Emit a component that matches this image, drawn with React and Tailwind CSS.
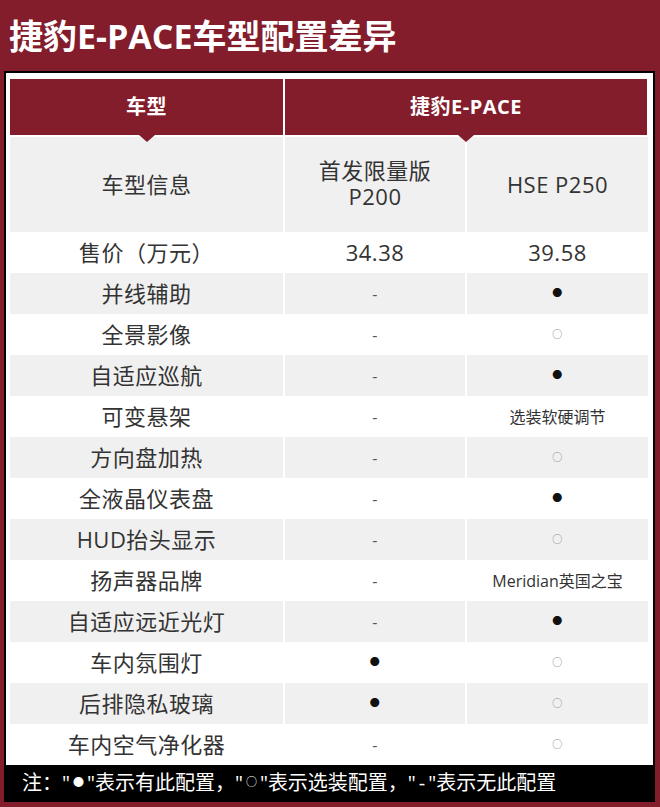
import React from 'react';

const rows = [
  { label: '售价（万元）', a: '34.38', b: '39.58', gray: false },
  { label: '并线辅助', a: '-', b: '●', gray: true },
  { label: '全景影像', a: '-', b: '○', gray: false },
  { label: '自适应巡航', a: '-', b: '●', gray: true },
  { label: '可变悬架', a: '-', b: '选装软硬调节', gray: false },
  { label: '方向盘加热', a: '-', b: '○', gray: true },
  { label: '全液晶仪表盘', a: '-', b: '●', gray: false },
  { label: 'HUD抬头显示', a: '-', b: '○', gray: true },
  { label: '扬声器品牌', a: '-', b: 'Meridian英国之宝', gray: false },
  { label: '自适应远近光灯', a: '-', b: '●', gray: true },
  { label: '车内氛围灯', a: '●', b: '○', gray: false },
  { label: '后排隐私玻璃', a: '●', b: '○', gray: true },
  { label: '车内空气净化器', a: '-', b: '○', gray: false },
];

const font = { fontFamily: '"Open Sans", "Noto Sans CJK SC", sans-serif' };

// symbols and long notes are drawn smaller than the plain values
const Value = ({ v }) => {
  if (v === '●') return <span className="text-[10px] text-[#111]">●</span>;
  if (v === '○') return <span className="text-[10px] text-[#888]">○</span>;
  if (v === '-') return <span className="text-[16px] text-[#555]">-</span>;
  if (v.length > 5) return <span className="text-[16px] tracking-normal">{v}</span>;
  return <span>{v}</span>;
};

const Triangle = () => (
  <div className="absolute left-1/2 top-full -translate-x-1/2 w-0 h-0 border-l-[8px] border-r-[8px] border-t-[7px] border-l-transparent border-r-transparent border-t-[#831c2b] z-10" />
);

export default function App() {
  return (
    <div className="w-[660px] h-[807px] bg-[#831c2b] overflow-hidden" style={font}>
      {/* Title */}
      <div className="h-[71px] flex items-center pl-[9px]">
        <h1 className="text-white font-bold text-[34px] leading-none">捷豹E-PACE车型配置差异</h1>
      </div>

      {/* Table frame */}
      <div className="ml-[4px] w-[651px] border-2 border-black bg-black">
        <div className="bg-white pt-[6px] pl-[4px] pr-[5px] text-[#333] text-[22px] tracking-[0.5px]">
          {/* Header */}
          <div className="grid grid-cols-[273px_362px] gap-x-[2px] mb-[2px]">
            <div className="relative h-[56px] bg-[#831c2b] flex items-center justify-center text-white font-bold text-[20px]">
              车型
              <Triangle />
            </div>
            <div className="relative h-[56px] bg-[#831c2b] flex items-center justify-center text-white font-bold text-[20px]">
              捷豹E-PACE
              <Triangle />
            </div>
          </div>

          {/* Trim row */}
          <div className="grid grid-cols-[273px_180px_181px] gap-x-[2px] h-[95px]">
            <div className="bg-[#f0f0f0] flex items-center justify-center">车型信息</div>
            <div className="bg-[#f0f0f0] flex items-center justify-center pb-[4px]">
              <div className="w-[120px] text-center leading-[26px]">首发限量版 P200</div>
            </div>
            <div className="bg-[#f0f0f0] flex items-center justify-center">HSE P250</div>
          </div>

          {/* Features */}
          {rows.map((r) => (
            <div key={r.label} className="grid grid-cols-[273px_180px_181px] gap-x-[2px] h-[41px]">
              <div className={`${r.gray ? 'bg-[#f0f0f0]' : 'bg-white'} flex items-center justify-center`}>{r.label}</div>
              <div className={`${r.gray ? 'bg-[#f0f0f0]' : 'bg-white'} flex items-center justify-center`}>
                <Value v={r.a} />
              </div>
              <div className={`${r.gray ? 'bg-[#f0f0f0]' : 'bg-white'} flex items-center justify-center`}>
                <Value v={r.b} />
              </div>
            </div>
          ))}
        </div>

        {/* Note */}
        <div className="h-[35px] flex items-center pl-[16px] text-white text-[20px]">
          注："<span className="text-[11px] px-[3px]">●</span>"表示有此配置，"<span className="text-[11px] px-[3px]">○</span>"表示选装配置，"<span className="px-[3px]">-</span>"表示无此配置
        </div>
      </div>
    </div>
  );
}
